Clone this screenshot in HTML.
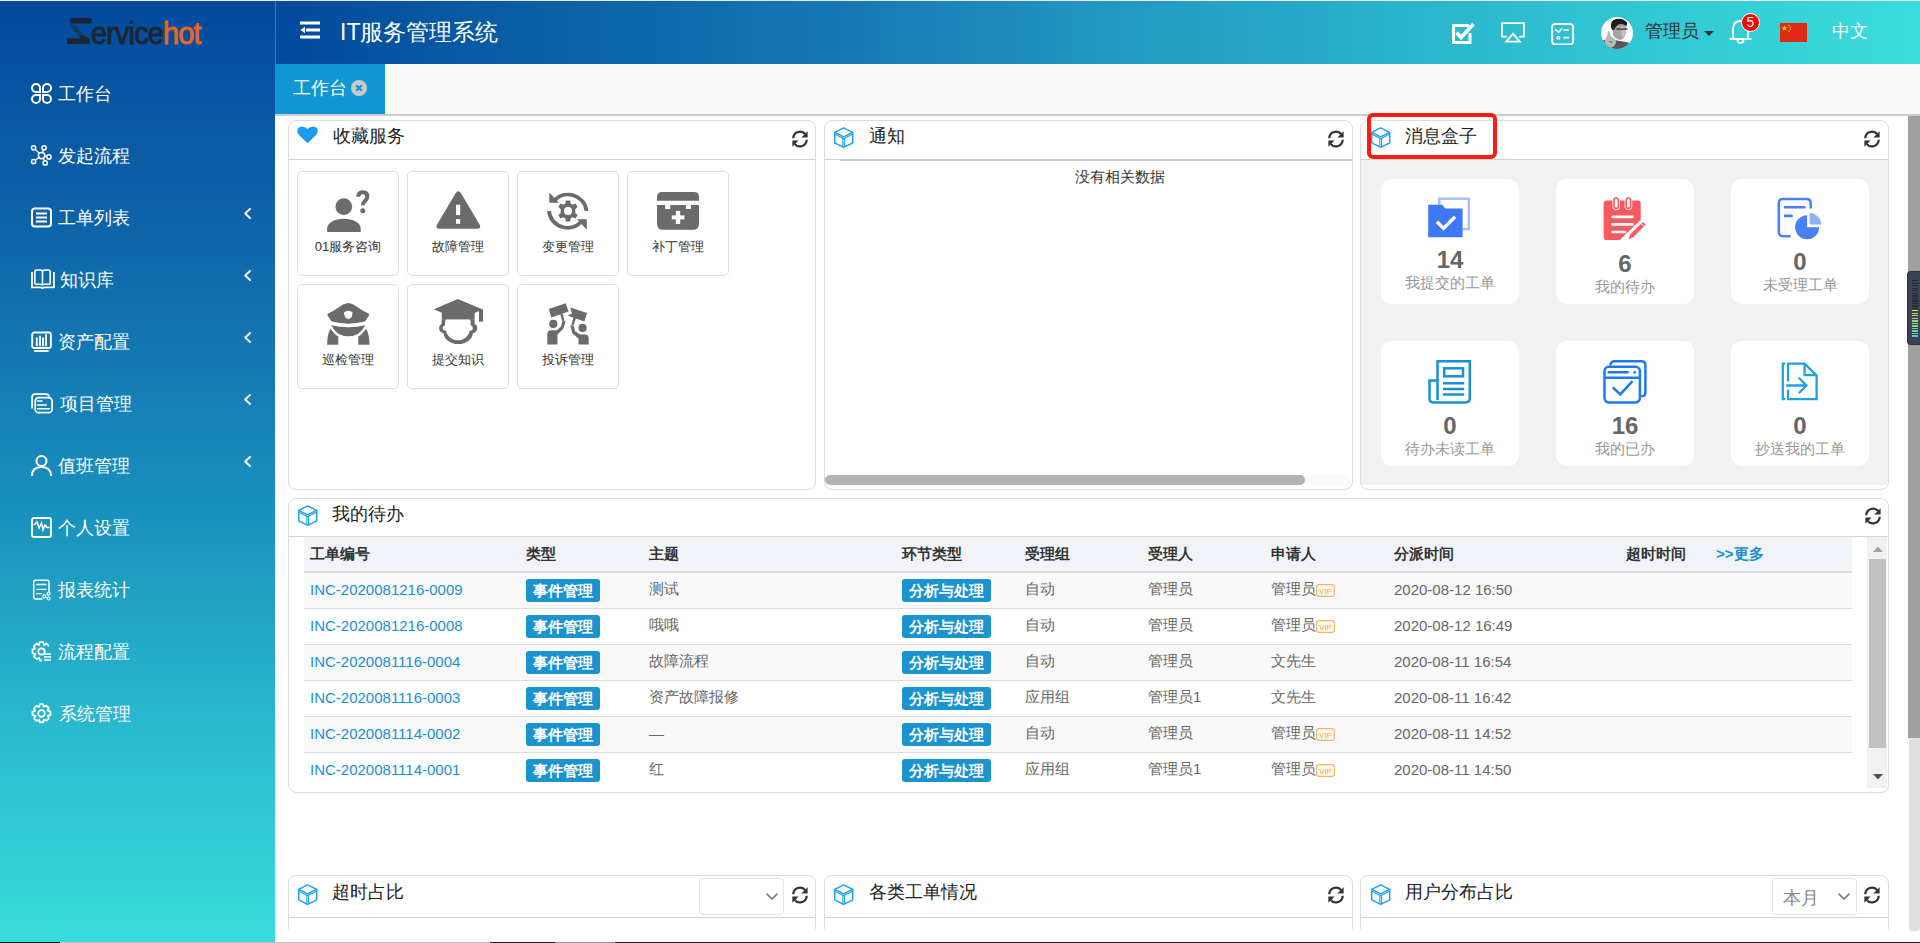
<!DOCTYPE html><html><head><meta charset="utf-8"><style>
*{box-sizing:border-box;margin:0;padding:0}
html,body{width:1920px;height:943px;overflow:hidden;background:#fff}
body{position:relative;font-family:"Liberation Sans",sans-serif;color:#333}
.abs{position:absolute}
svg{display:block}
#side{left:0;top:0;width:275px;height:943px;background:linear-gradient(to bottom,#024a9d 0%,#0f65a9 25%,#1a92bf 55%,#2bbfd0 80%,#39dcdd 100%)}
.mi{position:absolute;left:0;width:275px;height:40px;color:#fff;font-size:18px;line-height:40px}
.mi .ic{position:absolute;left:31px;top:10px;width:21px;height:21px}
#side ~ div svg{overflow:visible}
.mi .tx{position:absolute;left:58px;top:0}
.mi .ar{position:absolute;left:244px;top:10px;width:7px;height:11px}
#hdr{left:275px;top:0;width:1645px;height:64px;background:linear-gradient(to right,#024a9d 0%,#0b62a6 18%,#1679b4 35%,#2296c2 50%,#2bb9cd 72%,#3bdcdd 100%)}
#tabbar{left:275px;top:64px;width:1645px;height:52px;background:#f9f9f9;border-bottom:2px solid #cdcdcd}
#tab{left:275px;top:64px;width:110px;height:50px;background:#1096d0;color:#fff;font-size:18px;line-height:50px}
.panel{position:absolute;border:1px solid #dcdcdc;border-radius:8px;background:#fff;overflow:hidden}
.ph{position:absolute;left:0;top:0;right:0;height:39px;border-bottom:1px solid #d4d4d4}
.ph .t{position:absolute;left:44px;top:0;line-height:32px;font-size:18px;color:#222}
.ph .cube{position:absolute;left:9px;top:6px;width:20px;height:21px}
.ph .rf{position:absolute;right:5px;top:9px;width:18px;height:18px}
#vscroll{left:1909px;top:700px;width:11px;height:231px;background:#e0e0e0;border-radius:0 0 3px 3px}
#vthumb{left:1908px;top:116px;width:12px;height:622px;background:#a0a0a0}
.fav{position:absolute;width:102px;height:105px;border:1px solid #dedede;border-radius:5px;background:#fff}
.fav svg{position:absolute;left:50%;transform:translateX(-50%)}
.fav .lb{position:absolute;left:0;right:0;top:65px;text-align:center;font-size:13px;color:#333;line-height:20px}
.card{position:absolute;width:138px;height:125px;background:#fff;border-radius:11px;text-align:center}
.card svg{position:absolute;left:50%;transform:translateX(-50%)}
.card .n{position:absolute;left:0;right:0;font-size:24px;font-weight:bold;color:#666;line-height:24px}
.card .l{position:absolute;left:0;right:0;font-size:15px;color:#999;line-height:18px}
table{border-collapse:collapse;table-layout:fixed}
#tbl{position:absolute;left:15px;top:38px;width:1548px}
#tbl th{height:35px;background:#f0f3f8;border-bottom:2px solid #dcdcdc;text-align:left;font-size:15px;font-weight:bold;color:#333;padding:0 0 0 6px;white-space:nowrap}
#tbl td{height:36px;border-top:1px solid #dedede;font-size:15px;color:#666;padding:0 0 2px 6px;white-space:nowrap}
#tbl tr.odd td{background:#f9f9f9}
#tbl tr:first-child td{border-top:none}
.lk,#tbl td.lk,#tbl th .lk{color:#1a8fd0}
.bd{position:relative;top:1px;display:inline-block;background:#1b93cf;color:#fff;font-weight:bold;font-size:15px;height:23px;line-height:23px;padding:0 7px;border-radius:3px}
.vip{display:inline-block;vertical-align:-3px;margin-left:0}
.sel{position:absolute;width:85px;height:37px;border:1px solid #dfe6ea;border-radius:4px;background:#fff}
</style></head><body>
<div id="side" class="abs"></div>
<div class="abs" style="left:31px;top:83px;width:24px;height:22px"><svg viewBox="0 0 21 21" style="width:21px;height:21px;overflow:visible" fill="none" stroke="#fff" stroke-width="2"><path d="M9 9H5A4 4 0 1 1 9 5Z"/><path d="M12 9H16A4 4 0 1 0 12 5Z"/><path d="M9 12H5A4 4 0 1 0 9 16Z"/><path d="M12 12H16A4 4 0 1 1 12 16Z"/></svg></div>
<div class="abs" style="left:58px;top:80px;font-size:18px;line-height:28px;color:#fff;white-space:nowrap">工作台</div>
<div class="abs" style="left:31px;top:145px;width:24px;height:22px"><svg viewBox="0 0 21 21" style="width:21px;height:21px;overflow:visible" fill="none" stroke="#fff" stroke-width="1.5"><circle cx="10.6" cy="10.6" r="3.2"/><circle cx="2.6" cy="2.8" r="2.1"/><circle cx="13.1" cy="2.8" r="2.1"/><circle cx="17.9" cy="11.9" r="2.1"/><circle cx="2.6" cy="16.5" r="2.1"/><circle cx="14.2" cy="17.9" r="2.1"/><path d="M4.1 4.3L8.3 8.3M12.4 4.8L11.6 7.5M15.8 11.5L13.8 11.1M4.2 15.2L8.1 12.5M13.7 15.8L12.2 13.5" stroke-width="1.3"/></svg></div>
<div class="abs" style="left:58px;top:142px;font-size:18px;line-height:28px;color:#fff;white-space:nowrap">发起流程</div>
<div class="abs" style="left:31px;top:207px;width:24px;height:22px"><svg viewBox="0 0 21 21" style="width:21px;height:21px;overflow:visible" fill="none" stroke="#fff" stroke-width="2"><rect x="1" y="1.5" width="19" height="18" rx="3"/><path d="M5 6.5H16M5 10.5H16M5 14.5H16"/></svg></div>
<div class="abs" style="left:58px;top:204px;font-size:18px;line-height:28px;color:#fff;white-space:nowrap">工单列表</div>
<svg class="abs" style="left:244px;top:208px;width:7px;height:11px" viewBox="0 0 7 11" fill="none" stroke="#fff" stroke-width="1.9" stroke-linecap="round" stroke-linejoin="round"><path d="M6 1L1.2 5.5L6 10"/></svg>
<div class="abs" style="left:31px;top:269px;width:24px;height:22px"><svg viewBox="0 0 24 21" style="width:24px;height:21px" fill="none" stroke="#fff" stroke-width="1.8"><path d="M1 3.1V18.3H9.8Q11.5 18.3 11.5 20Q11.5 18.3 13.2 18.3H22.9V3.1"/><path d="M11.5 15.5V3Q11.5 1 9.5 1H5.8Q3.8 1 3.8 3V14.3Q3.8 15.3 5 15.3H9.5Q11.5 15.3 11.5 16.5Q11.5 15.3 13.5 15.3H18Q19.2 15.3 19.2 14.3V3Q19.2 1 17.2 1H13.5Q11.5 1 11.5 3" stroke-width="1.6"/></svg></div>
<div class="abs" style="left:60px;top:266px;font-size:18px;line-height:28px;color:#fff;white-space:nowrap">知识库</div>
<svg class="abs" style="left:244px;top:270px;width:7px;height:11px" viewBox="0 0 7 11" fill="none" stroke="#fff" stroke-width="1.9" stroke-linecap="round" stroke-linejoin="round"><path d="M6 1L1.2 5.5L6 10"/></svg>
<div class="abs" style="left:31px;top:331px;width:24px;height:22px"><svg viewBox="0 0 21 21" style="width:21px;height:21px;overflow:visible" fill="none" stroke="#fff" stroke-width="1.9"><rect x="1.2" y="1.55" width="18.7" height="15.4" rx="2"/><path d="M3.1 20H17.7"/><path d="M5.8 14.4V7.1M9 14.4V5.5M12 14.4V7.2M15 14.4V4" stroke-linecap="round"/></svg></div>
<div class="abs" style="left:58px;top:328px;font-size:18px;line-height:28px;color:#fff;white-space:nowrap">资产配置</div>
<svg class="abs" style="left:244px;top:332px;width:7px;height:11px" viewBox="0 0 7 11" fill="none" stroke="#fff" stroke-width="1.9" stroke-linecap="round" stroke-linejoin="round"><path d="M6 1L1.2 5.5L6 10"/></svg>
<div class="abs" style="left:31px;top:393px;width:24px;height:22px"><svg viewBox="0 0 22 21" style="width:22px;height:21px" fill="none" stroke="#fff" stroke-width="1.75"><path d="M1.1 15.5V4Q1.1 1 4 1H15Q17.5 1 18.5 3.5"/><rect x="4.2" y="4.5" width="16.9" height="15.2" rx="3.5"/><path d="M6.1 8H11.5M6.1 12H15.8M6.1 15.8H18.9" stroke-width="1.4"/></svg></div>
<div class="abs" style="left:59.5px;top:390px;font-size:18px;line-height:28px;color:#fff;white-space:nowrap">项目管理</div>
<svg class="abs" style="left:244px;top:394px;width:7px;height:11px" viewBox="0 0 7 11" fill="none" stroke="#fff" stroke-width="1.9" stroke-linecap="round" stroke-linejoin="round"><path d="M6 1L1.2 5.5L6 10"/></svg>
<div class="abs" style="left:31px;top:455px;width:24px;height:22px"><svg viewBox="0 0 21 21" style="width:21px;height:21px;overflow:visible" fill="none" stroke="#fff" stroke-width="2"><circle cx="10.5" cy="6" r="5"/><path d="M1 21Q1 12 10.5 12Q20 12 20 21"/></svg></div>
<div class="abs" style="left:58px;top:452px;font-size:18px;line-height:28px;color:#fff;white-space:nowrap">值班管理</div>
<svg class="abs" style="left:244px;top:456px;width:7px;height:11px" viewBox="0 0 7 11" fill="none" stroke="#fff" stroke-width="1.9" stroke-linecap="round" stroke-linejoin="round"><path d="M6 1L1.2 5.5L6 10"/></svg>
<div class="abs" style="left:31px;top:517px;width:24px;height:22px"><svg viewBox="0 0 21 21" style="width:21px;height:21px;overflow:visible" fill="none" stroke="#fff" stroke-width="1.9"><rect x="1" y="1" width="19" height="19" rx="2"/><path d="M3 8L6 5L8 11L10.5 6L12 13L14 8L16 10.5H18.5" stroke-width="1.5"/></svg></div>
<div class="abs" style="left:58px;top:514px;font-size:18px;line-height:28px;color:#fff;white-space:nowrap">个人设置</div>
<div class="abs" style="left:31px;top:579px;width:24px;height:22px"><svg viewBox="0 0 21 21" style="width:21px;height:21px;overflow:visible" fill="none" stroke="#fff" stroke-width="1.5"><path d="M11.5 20H4.7Q2.7 20 2.7 18V3.2Q2.7 1.2 4.7 1.2H16Q18 1.2 18 3.2V12.8"/><path d="M5.8 5.5H14.9M5.8 10.4H14.9M5.8 14.6H10.7" stroke-width="1.3" stroke-linecap="round"/><circle cx="13.3" cy="17.4" r="1.5" stroke-width="1.1"/><circle cx="17.6" cy="14.6" r="1.5" stroke-width="1.1"/><circle cx="17.6" cy="19.5" r="1.5" stroke-width="1.1"/><path d="M14.6 16.6L16.3 15.4M14.6 18.2L16.3 19" stroke-width="1"/></svg></div>
<div class="abs" style="left:58px;top:576px;font-size:18px;line-height:28px;color:#fff;white-space:nowrap">报表统计</div>
<div class="abs" style="left:31px;top:641px;width:24px;height:22px"><svg viewBox="0 0 21 21" style="width:21px;height:21px;overflow:visible" fill="none" stroke="#fff" stroke-width="1.8"><path d="M11 19.5H9L8.2 17L5.8 18.2L3 15.5L4.2 13L1.5 12V8.5L4 7.7L2.9 5.3L5.5 2.7L7.9 3.9L8.8 1.2H12.2L13.1 3.9L15.5 2.7L18 5.2"/><circle cx="10.5" cy="10.5" r="3.2"/><path d="M13 13H20M13 16H20M13 19H20" stroke-width="1.5"/></svg></div>
<div class="abs" style="left:58px;top:638px;font-size:18px;line-height:28px;color:#fff;white-space:nowrap">流程配置</div>
<div class="abs" style="left:31px;top:703px;width:24px;height:22px"><svg viewBox="0 0 21 21" style="width:21px;height:21px;overflow:visible" fill="none" stroke="#fff" stroke-width="1.8"><path d="M9 1.2H12L12.8 3.8L15.3 2.6L17.7 5L16.4 7.5L19.4 8.6V12L16.8 12.9L17.9 15.3L15.4 17.8L12.9 16.6L12 19.4H9L8.1 16.8L5.6 18L3.1 15.5L4.4 13L1.5 12V8.7L4.1 7.8L2.9 5.3L5.4 2.8L7.9 4Z" stroke-linejoin="round"/><circle cx="10.5" cy="10.5" r="3.3"/></svg></div>
<div class="abs" style="left:58.5px;top:700px;font-size:18px;line-height:28px;color:#fff;white-space:nowrap">系统管理</div>
<svg class="abs" style="left:66px;top:17px;width:27px;height:28px" viewBox="0 0 27 28"><rect x="4" y="1" width="22" height="5.5" rx="2" fill="#1b2632"/><path d="M4 8.5H9.5L18.5 19H13Z" fill="#1b2632" opacity=".9"/><path d="M5.5 9.6H10.5M6.5 11H11.7M7.7 12.4H12.9M8.9 13.8H14.1M10.1 15.2H15.3M11.3 16.6H16.5M12.5 18H17.7" stroke="#1f5d9e" stroke-width=".5"/><path d="M1 21.3H20Q24 21.3 24 24.3V25.4Q24 27 22 27H3Q1 27 1 25Z" fill="#1b2632"/><path d="M13 19H18.5L24.5 21.5H15Z" fill="#1b2632"/></svg>
<div class="abs" style="left:91px;top:17px;font-size:29px;line-height:34px;color:#1b2632;letter-spacing:-0.9px;white-space:nowrap;transform:scaleY(1.06);transform-origin:0 27px;-webkit-text-stroke:0.8px #1b2632">ervice<span style="color:#e8661f;-webkit-text-stroke:0.8px #e8661f">hot</span></div>
<div class="abs" style="left:205px;top:21px;font-size:6px;color:#1b2632">®</div>
<div id="hdr" class="abs"></div>
<div class="abs" style="left:275px;top:0;width:1px;height:114px;background:rgba(255,255,255,.25)"></div>
<svg class="abs" style="left:300px;top:21px;width:20px;height:18px" viewBox="0 0 20 18" fill="#fff"><rect x="0" y="0.5" width="20" height="3"/><rect x="6" y="7.5" width="14" height="3"/><rect x="0" y="14.5" width="20" height="3"/><path d="M0.5 9L5 5.8V12.2Z"/></svg>
<div class="abs" style="left:340px;top:14px;font-size:23px;line-height:36px;color:#fff;white-space:nowrap">IT服务管理系统</div>
<svg class="abs" style="left:1452px;top:21px;width:23px;height:23px" viewBox="0 0 23 23" fill="none"><path d="M17 4.5H1.5V21.5H18V12" stroke="#fff" stroke-width="3"/><path d="M4.5 11.5L9 16.5L21.5 3" stroke="#fff" stroke-width="3.6"/></svg>
<svg class="abs" style="left:1501px;top:22px;width:24px;height:21px" viewBox="0 0 24 21" fill="none" stroke="#fff" stroke-width="1.6"><path d="M6 14.7H1V1.2H23V14.7H18" stroke-width="1.7"/><path d="M12 11.6L18.8 19.7H5.2Z" stroke-width="1.7"/></svg>
<svg class="abs" style="left:1551px;top:22px;width:24px;height:23px" viewBox="0 0 24 23" fill="none" stroke="#fff" stroke-width="2"><rect x="1.1" y="1.9" width="21" height="20.6" rx="3.2"/><path d="M4.2 7.4L7.6 10.3L10.9 6.4" stroke-width="1.6"/><path d="M12.4 8H17.9M12.4 15.7H17.9" stroke-width="1.7"/><circle cx="7.4" cy="15.7" r="1.3" stroke-width="1.5"/></svg>
<svg class="abs" style="left:1601px;top:17px;width:32px;height:32px" viewBox="0 0 32 32"><defs><clipPath id="av"><circle cx="16" cy="16" r="16"/></clipPath></defs><circle cx="16" cy="16" r="16" fill="#fff"/><g clip-path="url(#av)"><path d="M0 24Q8 21.5 16 23.5Q24 24 32 27V32H0Z" fill="#585858"/><path d="M11 8Q11 3 17 3Q25 3 25.5 9L25 16.5Q23 22 19 23Q14 22 12 18Z" fill="#a4a4a4"/><path d="M19.5 9.5Q25.2 9.5 25 14Q24.5 19 20.5 20.5Q21.5 15 19.5 9.5Z" fill="#c4c4c4"/><path d="M10 10.5Q9 3 15 2Q22 0.5 26.2 5.5L25.6 9Q21 6 17.5 7.5Q14.5 9 13.8 12.5L11.2 13Z" fill="#1e1e1e"/><path d="M15.5 12.2H26.5" stroke="#2a2a2a" stroke-width="1.3"/><path d="M7 14Q8.6 13.4 9.2 16.8L10.2 19.8Q14.2 21 15.2 25Q14.2 30 9 31Q4 30 3.5 26Q4 21 6.2 19Z" fill="#b8b8b8"/><path d="M8 25Q10 24 11 26" stroke="#666" stroke-width="1.2" fill="none"/></g></svg>
<div class="abs" style="left:1645px;top:17px;font-size:18px;line-height:28px;color:#333;white-space:nowrap">管理员</div>
<svg class="abs" style="left:1704px;top:31px;width:10px;height:5px" viewBox="0 0 10 5"><path d="M0 0H10L5 5Z" fill="#333"/></svg>
<svg class="abs" style="left:1729px;top:19px;width:23px;height:26px" viewBox="0 0 23 26" fill="none" stroke="#fff" stroke-width="1.8"><path d="M4 19.5V10.5Q4 2 11.5 2Q19 2 19 10.5V19.5"/><path d="M0.5 20H22.5" stroke-width="2"/><path d="M8.5 20.5Q8.5 24 11.5 24Q14.5 24 14.5 20.5"/></svg>
<div class="abs" style="left:1741px;top:13px;width:19px;height:19px;border-radius:50%;background:#f00;border:1.5px solid #fff;color:#fff;font-size:14px;line-height:16px;text-align:center">5</div>
<svg class="abs" style="left:1780px;top:23px;width:27px;height:19px" viewBox="0 0 27 19"><rect width="27" height="19" fill="#de2a12"/><path d="M4.5 2.2L5.3 4.4H7.5L5.8 5.7L6.4 7.8L4.5 6.6L2.6 7.8L3.2 5.7L1.5 4.4H3.7Z" fill="#ffde00"/><circle cx="9" cy="2.5" r=".7" fill="#ffde00"/><circle cx="10.2" cy="4.3" r=".7" fill="#ffde00"/><circle cx="10.2" cy="6.6" r=".7" fill="#ffde00"/><circle cx="9" cy="8.3" r=".7" fill="#ffde00"/></svg>
<div class="abs" style="left:1832px;top:17px;font-size:18px;line-height:28px;color:#fff;white-space:nowrap">中文</div>
<div id="tabbar" class="abs"></div>
<div id="tab" class="abs"></div>
<div class="abs" style="left:293px;top:74px;font-size:18px;line-height:28px;color:#fff;white-space:nowrap">工作台</div>
<svg class="abs" style="left:351px;top:80px;width:16px;height:16px" viewBox="0 0 16 16"><circle cx="8" cy="8" r="8" fill="#cbcbcb"/><path d="M5.2 5.2L10.8 10.8M10.8 5.2L5.2 10.8" stroke="#1096d0" stroke-width="2.2"/></svg>
<div class="abs" style="left:0;top:0;width:1920px;height:1px;background:#ece8e8"></div>
<div id="vscroll" class="abs"></div>
<div id="vthumb" class="abs"></div>
<div class="abs" style="left:1907px;top:271px;width:13px;height:74px;background:#3d4352;border-radius:4px 0 0 4px;border:1px solid #2c313c;border-right:none"></div>
<div class="abs" style="left:1912px;top:280px;width:6px;height:30px;background:repeating-linear-gradient(to bottom,#262a33 0,#262a33 1.3px,transparent 1.3px,transparent 2.55px)"></div>
<div class="abs" style="left:1912px;top:310px;width:6px;height:27px;background:repeating-linear-gradient(to bottom,rgba(61,67,82,0) 0,rgba(61,67,82,0) 1.3px,#3d4352 1.3px,#3d4352 2.55px),linear-gradient(to bottom,#d0d848,#7ad88a 60%,#3fd6c4)"></div>
<div class="panel" style="left:288px;top:120px;width:528px;height:370px"></div>
<div class="panel" style="left:824px;top:120px;width:529px;height:370px"></div>
<div class="panel" style="left:1360px;top:120px;width:529px;height:370px"></div>
<div class="panel" style="left:288px;top:498px;width:1601px;height:295px"></div>
<div class="abs" style="left:289px;top:159px;width:526px;height:1px;background:#d4d4d4"></div>
<div class="abs" style="left:825px;top:159px;width:527px;height:1px;background:#d4d4d4"></div>
<div class="abs" style="left:1361px;top:159px;width:527px;height:1px;background:#d4d4d4"></div>
<div class="abs" style="left:289px;top:536px;width:1599px;height:1px;background:#d4d4d4"></div>
<svg class="abs" style="left:297px;top:126px;width:21px;height:18px" viewBox="0 0 21 18"><path d="M10.5 17.3L2.2 9.2Q0 7 0.3 4.6Q0.8 0.8 4.6 0.4Q7.8 0.2 10.5 3.1Q13.2 0.2 16.4 0.4Q20.2 0.8 20.7 4.6Q21 7 18.8 9.2Z" fill="#1a9cf5"/></svg>
<div class="abs" style="left:333px;top:122px;font-size:18px;line-height:28px;color:#222;white-space:nowrap">收藏服务</div>
<svg class="abs" style="left:791px;top:130px;width:18px;height:18px" viewBox="0 0 18 18" fill="none"><path d="M2.3 8.2A6.7 6.7 0 0 1 14.3 4.2" stroke="#333" stroke-width="2.2"/><path d="M16.6 1.3V7.6H10.4Z" fill="#333"/><path d="M15.7 9.8A6.7 6.7 0 0 1 3.7 13.8" stroke="#333" stroke-width="2.2"/><path d="M1.4 16.7V10.4H7.6Z" fill="#333"/></svg>
<div class="fav" style="left:297px;top:171px"><div class="lb">01服务咨询</div></div>
<div class="abs" style="left:327px;top:190px;width:43px;height:42px"><svg width="43" height="42" viewBox="0 0 43 42" fill="#6b6b6b"><circle cx="16.8" cy="16.6" r="8.4"/><path d="M0.1 42V38.5A16.8 9.8 0 0 1 33.7 38.5V42Z"/><path d="M31.3 6.8Q31.3 2.2 35.8 2.2Q40.3 2.2 40.3 6.6Q40.3 9.2 37.8 11.2Q35.8 12.8 35.8 15.2" fill="none" stroke="#6b6b6b" stroke-width="4"/><circle cx="35.8" cy="20.7" r="2.5"/></svg></div>
<div class="fav" style="left:407px;top:171px"><div class="lb">故障管理</div></div>
<div class="abs" style="left:436px;top:191px;width:45px;height:39px"><svg width="45" height="39" viewBox="0 0 45 39"><path d="M19.6 2.2Q22.3 -1.8 25 2.2L43.6 33.5Q45.7 37.8 41 37.8H3.6Q-1 37.8 1.1 33.5Z" fill="#6b6b6b"/><rect x="20" y="13.7" width="4.2" height="10.4" fill="#fff"/><rect x="20" y="28.1" width="4.2" height="4.7" fill="#fff"/></svg></div>
<div class="fav" style="left:517px;top:171px"><div class="lb">变更管理</div></div>
<div class="abs" style="left:547px;top:190px;width:42px;height:42px"><svg width="42" height="42" viewBox="0 0 42 42"><path d="M7.5 10.5A18.6 18.6 0 0 1 39.6 21" fill="none" stroke="#6b6b6b" stroke-width="3.8"/><path d="M2.3 2.4V12.8H11.8Z" fill="#6b6b6b"/><path d="M2 21A18.6 18.6 0 0 0 34 32" fill="none" stroke="#6b6b6b" stroke-width="3.8"/><path d="M39.8 39.7V29.2H30Z" fill="#6b6b6b"/><g transform="translate(21 21)"><path d="M-2 -10.5H2L2.6 -7.5L4.8 -6.3L7.6 -7.4L9.6 -4L7.3 -2L7.3 2L9.6 4L7.6 7.4L4.8 6.3L2.6 7.5L2 10.5H-2L-2.6 7.5L-4.8 6.3L-7.6 7.4L-9.6 4L-7.3 2L-7.3 -2L-9.6 -4L-7.6 -7.4L-4.8 -6.3L-2.6 -7.5Z" fill="#6b6b6b"/><circle r="4.1" fill="#fff"/></g></svg></div>
<div class="fav" style="left:627px;top:171px"><div class="lb">补丁管理</div></div>
<div class="abs" style="left:657px;top:192px;width:42px;height:38px"><svg width="42" height="38" viewBox="0 0 42 38"><path d="M0 8.7V5Q0 0.1 5 0.1H37Q42 0.1 42 5V8.7Z" fill="#6b6b6b"/><path d="M0 12.9H8.2V17.1H13.2V12.9H28.9V17.1H33.9V12.9H42V31.7Q42 37.7 36 37.7H6Q0 37.7 0 31.7Z" fill="#6b6b6b"/><rect x="18.8" y="18.9" width="4.4" height="13.1" fill="#fff"/><rect x="14.8" y="23.4" width="12.6" height="4" fill="#fff"/></svg></div>
<div class="fav" style="left:297px;top:284px"><div class="lb">巡检管理</div></div>
<div class="abs" style="left:327px;top:302px;width:43px;height:43px"><svg width="43" height="43" viewBox="0 0 43 43" fill="#6b6b6b"><path d="M0.6 11.8Q6 9.5 13 4.5Q17 1 21.3 1Q25.6 1 29.6 4.5Q36.6 9.5 42 11.8Q42.6 13.2 41.6 14.2L37.9 19.6Q21.3 23.8 4.7 19.6L1 14.2Q0 13.2 0.6 11.8Z"/><path d="M17 10.3Q21.3 7.3 25.6 10.3L24.8 14.8Q21.3 19.3 17.8 14.8Z" fill="#fff"/><path d="M4.3 23.3Q21.3 27 38.3 23.3Q33 34.3 21.3 34.3Q9.6 34.3 4.3 23.3Z"/><path d="M3.5 26.5Q7.5 32.5 11.3 34.5V42.7H0.1Q0.2 32.5 3.5 26.5Z"/><path d="M39.1 26.5Q35.1 32.5 31.3 34.5V42.7H42.5Q42.4 32.5 39.1 26.5Z"/></svg></div>
<div class="fav" style="left:407px;top:284px"><div class="lb">提交知识</div></div>
<div class="abs" style="left:433px;top:299px;width:50px;height:47px"><svg width="50" height="47" viewBox="0 0 50 47" fill="#6b6b6b"><path d="M0.8 10.2L24.7 0L49.8 10.6L41.6 13.9V20.8H8.8V13.7Z"/><path d="M46 10.4H50V22.6H46Z"/><path d="M8.6 20.5H41.6V24.7Q44.5 26.5 44.2 29.5Q44 33 39.9 34.3A14.7 11.4 0 0 1 10.55 34.3Q6.2 33 6.1 29.5Q6 26.5 8.6 24.7Z"/><path d="M13.6 20.6H36.1Q37.6 20.6 37.6 22.1V26.3Q39.8 27 39.8 29.2Q39.8 31.5 36.65 31.7A11.8 10.2 0 0 1 13.1 31.7Q9.6 31.5 9.6 29.2Q9.6 27 12.1 26.3V22.1Q12.1 20.6 13.6 20.6Z" fill="#fff"/></svg></div>
<div class="fav" style="left:517px;top:284px"><div class="lb">投诉管理</div></div>
<div class="abs" style="left:547px;top:302px;width:42px;height:43px"><svg width="42" height="43" viewBox="0 0 42 43" fill="#6b6b6b"><path d="M1.75 7L18.66 1.16L21.57 9.6L4.37 15.45Z"/><path d="M13.2 12.4L15.6 11.6L17.6 19.4L15.4 19.6Z"/><circle cx="6.3" cy="21.9" r="4.1"/><path d="M0.3 42.6V32.3Q0.3 28.3 4.6 28.3H9.9L14 24.5L15.2 19.2L18.7 19.2L16.3 26.8L10.5 32.6V42.6Z"/><path d="M23.3 5.5L40.2 11.1L37.3 19.5L20.4 13.4L24.8 11.7Z"/><path d="M26.6 15.2L29 16L26.6 23.6L24.2 23.2Z"/><circle cx="35.6" cy="25.9" r="4.1"/><path d="M41.7 42.6V36.4Q41.7 32.6 37.9 32.6H33.2L28 29.2L26.8 23.9L23.3 23.3L25.4 31.5L31.5 36.4V42.6Z"/></svg></div>
<svg class="abs" style="left:834px;top:127px;width:20px;height:21px" viewBox="0 0 20 21" fill="none" stroke="#1ea0f2" stroke-width="1.5" stroke-linejoin="round"><path d="M9.65 0.8L18.7 5.3V15.8L9.65 20.3L0.7 15.8V5.3Z"/><path d="M0.9 5.3L9.65 9.9L18.4 5.3"/><path d="M1 7.3L9.65 11.7L18.3 7.3" stroke-width="1.1"/><path d="M8.8 11.5V19.9M10.5 11.5V19.9" stroke-width="1.1"/></svg>
<div class="abs" style="left:869px;top:122px;font-size:18px;line-height:28px;color:#222;white-space:nowrap">通知</div>
<svg class="abs" style="left:1327px;top:130px;width:18px;height:18px" viewBox="0 0 18 18" fill="none"><path d="M2.3 8.2A6.7 6.7 0 0 1 14.3 4.2" stroke="#333" stroke-width="2.2"/><path d="M16.6 1.3V7.6H10.4Z" fill="#333"/><path d="M15.7 9.8A6.7 6.7 0 0 1 3.7 13.8" stroke="#333" stroke-width="2.2"/><path d="M1.4 16.7V10.4H7.6Z" fill="#333"/></svg>
<div class="abs" style="left:840px;top:159px;width:512px;height:2px;background:#d0d0d0"></div>
<div class="abs" style="left:1075px;top:167px;font-size:15px;line-height:20px;color:#333;white-space:nowrap">没有相关数据</div>
<div class="abs" style="left:825px;top:475px;width:526px;height:10px;border-radius:5px;background:#fafafa"></div>
<div class="abs" style="left:825px;top:475px;width:480px;height:10px;border-radius:5px;background:#b3b3b3"></div>
<div class="abs" style="left:1361px;top:160px;width:527px;height:325px;background:#f1f1f1"></div>
<svg class="abs" style="left:1371px;top:127px;width:20px;height:21px" viewBox="0 0 20 21" fill="none" stroke="#1ea0f2" stroke-width="1.5" stroke-linejoin="round"><path d="M9.65 0.8L18.7 5.3V15.8L9.65 20.3L0.7 15.8V5.3Z"/><path d="M0.9 5.3L9.65 9.9L18.4 5.3"/><path d="M1 7.3L9.65 11.7L18.3 7.3" stroke-width="1.1"/><path d="M8.8 11.5V19.9M10.5 11.5V19.9" stroke-width="1.1"/></svg>
<div class="abs" style="left:1405px;top:122px;font-size:18px;line-height:28px;color:#222;white-space:nowrap">消息盒子</div>
<svg class="abs" style="left:1863px;top:130px;width:18px;height:18px" viewBox="0 0 18 18" fill="none"><path d="M2.3 8.2A6.7 6.7 0 0 1 14.3 4.2" stroke="#333" stroke-width="2.2"/><path d="M16.6 1.3V7.6H10.4Z" fill="#333"/><path d="M15.7 9.8A6.7 6.7 0 0 1 3.7 13.8" stroke="#333" stroke-width="2.2"/><path d="M1.4 16.7V10.4H7.6Z" fill="#333"/></svg>
<div class="abs" style="left:1367px;top:113px;width:130px;height:46px;border:4.5px solid #ff1b0f;border-radius:6px"></div>
<div class="card" style="left:1381px;top:179px"></div>
<div class="abs" style="left:1428px;top:197px;width:42px;height:41px"><svg width="42" height="41" viewBox="0 0 42 41"><rect x="11.3" y="1.7" width="29.5" height="30.4" fill="none" stroke="#a3c0fb" stroke-width="2.4"/><path d="M0.2 7.8H14.2L17.2 11.6H34.6V40.2H0.2Z" fill="#3d78f7"/><path d="M8.9 24.8L15.6 31.4L27 19.8" fill="none" stroke="#fff" stroke-width="3.4"/></svg></div>
<div class="abs" style="left:1381px;top:248px;width:138px;text-align:center;font-size:24px;font-weight:bold;color:#666;line-height:24px">14</div>
<div class="abs" style="left:1381px;top:275px;width:138px;text-align:center;font-size:15px;color:#999;line-height:16px;white-space:nowrap">我提交的工单</div>
<div class="card" style="left:1556px;top:179px"></div>
<div class="abs" style="left:1603px;top:197px;width:45px;height:44px"><svg width="45" height="44" viewBox="0 0 45 44"><path d="M3.6 3.5H34.7Q37.7 3.5 37.7 6.5V22.7L16.7 43.1H3.6Q0.6 43.1 0.6 40.1V6.5Q0.6 3.5 3.6 3.5Z" fill="#f55a60"/><rect x="9.4" y="-0.5" width="7.6" height="13.6" rx="3.8" fill="#fff"/><rect x="21.6" y="-0.5" width="7.6" height="13.6" rx="3.8" fill="#fff"/><rect x="11" y="1.07" width="4.4" height="10.3" rx="2.2" fill="none" stroke="#f55a60" stroke-width="1.6"/><rect x="23.2" y="1.07" width="4.4" height="10.3" rx="2.2" fill="none" stroke="#f55a60" stroke-width="1.6"/><path d="M9.7 19.8H29.5M9.7 27.4H29.5M9.7 35H22" stroke="#fff" stroke-width="2.7" stroke-linecap="round"/><path d="M25.5 42.5L27.5 37L40 25L42.6 27.6L30.6 40Z" fill="#f55a60"/><path d="M38.2 26.6L40.8 29.2" stroke="#fff" stroke-width="1"/></svg></div>
<div class="abs" style="left:1556px;top:252px;width:138px;text-align:center;font-size:24px;font-weight:bold;color:#666;line-height:24px">6</div>
<div class="abs" style="left:1556px;top:279px;width:138px;text-align:center;font-size:15px;color:#999;line-height:16px;white-space:nowrap">我的待办</div>
<div class="card" style="left:1731px;top:179px"></div>
<div class="abs" style="left:1777px;top:197px;width:45px;height:43px"><svg width="45" height="43" viewBox="0 0 45 43" fill="none"><path d="M12.5 39.2H6Q1.8 39.2 1.8 35V6Q1.8 1.9 6 1.9H29.5Q33.7 1.9 33.7 6V10.5" stroke="#4a80f5" stroke-width="2.5" stroke-linecap="round"/><path d="M8 10.2H27.5M8 18.9H14.6" stroke="#4a80f5" stroke-width="2.6" stroke-linecap="round"/><path d="M30.1 18.3V30.3H42.1A12 12 0 1 1 30.1 18.3Z" fill="#4a80f5"/><path d="M32.6 16A11.6 11.6 0 0 1 44.2 27.6H32.6Z" fill="#8fb0f5"/></svg></div>
<div class="abs" style="left:1731px;top:250px;width:138px;text-align:center;font-size:24px;font-weight:bold;color:#666;line-height:24px">0</div>
<div class="abs" style="left:1731px;top:277px;width:138px;text-align:center;font-size:15px;color:#999;line-height:16px;white-space:nowrap">未受理工单</div>
<div class="card" style="left:1381px;top:341px"></div>
<div class="abs" style="left:1428px;top:360px;width:44px;height:44px"><svg width="44" height="44" viewBox="0 0 44 44" fill="none" stroke="#1a8fd8" stroke-width="2.5"><path d="M9.5 40V1.3H41.8V38Q41.8 42.4 37.5 42.4H5.5Q1.5 42.4 1.5 38.5V20.6H9.5"/><rect x="16.2" y="8.3" width="18.8" height="8" /><path d="M15 23.3H36.2M15 28.9H36.2M15 34.4H36.2"/></svg></div>
<div class="abs" style="left:1381px;top:414px;width:138px;text-align:center;font-size:24px;font-weight:bold;color:#666;line-height:24px">0</div>
<div class="abs" style="left:1381px;top:441px;width:138px;text-align:center;font-size:15px;color:#999;line-height:16px;white-space:nowrap">待办未读工单</div>
<div class="card" style="left:1556px;top:341px"></div>
<div class="abs" style="left:1603px;top:360px;width:44px;height:44px"><svg width="44" height="44" viewBox="0 0 44 44" fill="none" stroke="#1e78f5" stroke-width="2.5"><path d="M7.4 5.5Q7.4 1.3 11.6 1.3H38.2Q42.4 1.3 42.4 5.5V32.2Q42.4 36.3 38.3 36.3"/><rect x="1.5" y="6.8" width="35.4" height="35.6" rx="4.3"/><path d="M1.5 17.8H36.9"/><path d="M5.8 12.3H24.6" stroke-width="2.6" stroke-linecap="round"/><path d="M31.6 12.3H31.7" stroke-width="2.8" stroke-linecap="round"/><path d="M9.8 27.3L17.2 34.4L29.5 21.2"/></svg></div>
<div class="abs" style="left:1556px;top:414px;width:138px;text-align:center;font-size:24px;font-weight:bold;color:#666;line-height:24px">16</div>
<div class="abs" style="left:1556px;top:441px;width:138px;text-align:center;font-size:15px;color:#999;line-height:16px;white-space:nowrap">我的已办</div>
<div class="card" style="left:1731px;top:341px"></div>
<div class="abs" style="left:1781px;top:362px;width:37px;height:39px"><svg width="37" height="39" viewBox="0 0 37 39" fill="none" stroke="#22a0e0" stroke-width="2.3"><path d="M4.3 1.6H1.8V37.1H4.3"/><path d="M7.04 19.5V1.6H23.6L35.6 13.6V37.1H7.04V27.8"/><path d="M23.6 1.6V13.1H35.6"/><path d="M5.2 23.5H25.5M17.8 15.8L25.5 23.5L17.8 31.2"/></svg></div>
<div class="abs" style="left:1731px;top:414px;width:138px;text-align:center;font-size:24px;font-weight:bold;color:#666;line-height:24px">0</div>
<div class="abs" style="left:1731px;top:441px;width:138px;text-align:center;font-size:15px;color:#999;line-height:16px;white-space:nowrap">抄送我的工单</div>
<svg class="abs" style="left:298px;top:505px;width:20px;height:21px" viewBox="0 0 20 21" fill="none" stroke="#1ea0f2" stroke-width="1.5" stroke-linejoin="round"><path d="M9.65 0.8L18.7 5.3V15.8L9.65 20.3L0.7 15.8V5.3Z"/><path d="M0.9 5.3L9.65 9.9L18.4 5.3"/><path d="M1 7.3L9.65 11.7L18.3 7.3" stroke-width="1.1"/><path d="M8.8 11.5V19.9M10.5 11.5V19.9" stroke-width="1.1"/></svg>
<div class="abs" style="left:332px;top:500px;font-size:18px;line-height:28px;color:#222;white-space:nowrap">我的待办</div>
<svg class="abs" style="left:1864px;top:507px;width:18px;height:18px" viewBox="0 0 18 18" fill="none"><path d="M2.3 8.2A6.7 6.7 0 0 1 14.3 4.2" stroke="#333" stroke-width="2.2"/><path d="M16.6 1.3V7.6H10.4Z" fill="#333"/><path d="M15.7 9.8A6.7 6.7 0 0 1 3.7 13.8" stroke="#333" stroke-width="2.2"/><path d="M1.4 16.7V10.4H7.6Z" fill="#333"/></svg>
<table id="tbl" style="left:304px;top:537px;position:absolute;width:1548px"><colgroup><col style="width:216px"><col style="width:123px"><col style="width:253px"><col style="width:123px"><col style="width:123px"><col style="width:123px"><col style="width:123px"><col style="width:232px"><col style="width:90px"><col style="width:142px"></colgroup><tr><th>工单编号</th><th>类型</th><th>主题</th><th>环节类型</th><th>受理组</th><th>受理人</th><th>申请人</th><th>分派时间</th><th>超时时间</th><th><span class="lk">&gt;&gt;更多</span></th></tr><tr class="odd"><td class="lk">INC-2020081216-0009</td><td><span class="bd">事件管理</span></td><td>测试</td><td><span class="bd">分析与处理</span></td><td>自动</td><td>管理员</td><td>管理员<svg class="vip" width="19" height="13" viewBox="0 0 19 13"><rect x="0.6" y="0.6" width="17.8" height="11.8" rx="2.5" fill="#fff8ee" stroke="#f6b66a" stroke-width="1.1"/><text x="9.5" y="9.6" text-anchor="middle" font-family="Liberation Sans" font-size="8" fill="#f6a94f">VIP</text></svg></td><td>2020-08-12 16:50</td><td></td><td></td></tr><tr><td class="lk">INC-2020081216-0008</td><td><span class="bd">事件管理</span></td><td>哦哦</td><td><span class="bd">分析与处理</span></td><td>自动</td><td>管理员</td><td>管理员<svg class="vip" width="19" height="13" viewBox="0 0 19 13"><rect x="0.6" y="0.6" width="17.8" height="11.8" rx="2.5" fill="#fff8ee" stroke="#f6b66a" stroke-width="1.1"/><text x="9.5" y="9.6" text-anchor="middle" font-family="Liberation Sans" font-size="8" fill="#f6a94f">VIP</text></svg></td><td>2020-08-12 16:49</td><td></td><td></td></tr><tr class="odd"><td class="lk">INC-2020081116-0004</td><td><span class="bd">事件管理</span></td><td>故障流程</td><td><span class="bd">分析与处理</span></td><td>自动</td><td>管理员</td><td>文先生</td><td>2020-08-11 16:54</td><td></td><td></td></tr><tr><td class="lk">INC-2020081116-0003</td><td><span class="bd">事件管理</span></td><td>资产故障报修</td><td><span class="bd">分析与处理</span></td><td>应用组</td><td>管理员1</td><td>文先生</td><td>2020-08-11 16:42</td><td></td><td></td></tr><tr class="odd"><td class="lk">INC-2020081114-0002</td><td><span class="bd">事件管理</span></td><td>—</td><td><span class="bd">分析与处理</span></td><td>自动</td><td>管理员</td><td>管理员<svg class="vip" width="19" height="13" viewBox="0 0 19 13"><rect x="0.6" y="0.6" width="17.8" height="11.8" rx="2.5" fill="#fff8ee" stroke="#f6b66a" stroke-width="1.1"/><text x="9.5" y="9.6" text-anchor="middle" font-family="Liberation Sans" font-size="8" fill="#f6a94f">VIP</text></svg></td><td>2020-08-11 14:52</td><td></td><td></td></tr><tr><td class="lk">INC-2020081114-0001</td><td><span class="bd">事件管理</span></td><td>红</td><td><span class="bd">分析与处理</span></td><td>应用组</td><td>管理员1</td><td>管理员<svg class="vip" width="19" height="13" viewBox="0 0 19 13"><rect x="0.6" y="0.6" width="17.8" height="11.8" rx="2.5" fill="#fff8ee" stroke="#f6b66a" stroke-width="1.1"/><text x="9.5" y="9.6" text-anchor="middle" font-family="Liberation Sans" font-size="8" fill="#f6a94f">VIP</text></svg></td><td>2020-08-11 14:50</td><td></td><td></td></tr></table>
<div class="abs" style="left:1867px;top:537px;width:20px;height:251px;background:#f1f1f1"></div>
<div class="abs" style="left:1869px;top:559px;width:17px;height:189px;background:#c1c1c1"></div>
<svg class="abs" style="left:1873px;top:546px;width:10px;height:6px" viewBox="0 0 10 6"><path d="M0 6H10L5 0.5Z" fill="#a3a3a3"/></svg>
<svg class="abs" style="left:1873px;top:774px;width:10px;height:6px" viewBox="0 0 10 6"><path d="M0 0H10L5 5.5Z" fill="#505050"/></svg>
<div class="abs" style="left:275px;top:866px;width:1633px;height:63px;overflow:hidden">
<div class="panel" style="left:13px;top:9px;width:528px;height:120px"></div>
<div class="abs" style="left:14px;top:51px;width:526px;height:1px;background:#d4d4d4"></div>
<div class="panel" style="left:549px;top:9px;width:529px;height:120px"></div>
<div class="abs" style="left:550px;top:51px;width:527px;height:1px;background:#d4d4d4"></div>
<div class="panel" style="left:1085px;top:9px;width:529px;height:120px"></div>
<div class="abs" style="left:1086px;top:51px;width:527px;height:1px;background:#d4d4d4"></div>
</div>
<svg class="abs" style="left:298px;top:884px;width:20px;height:21px" viewBox="0 0 20 21" fill="none" stroke="#1ea0f2" stroke-width="1.5" stroke-linejoin="round"><path d="M9.65 0.8L18.7 5.3V15.8L9.65 20.3L0.7 15.8V5.3Z"/><path d="M0.9 5.3L9.65 9.9L18.4 5.3"/><path d="M1 7.3L9.65 11.7L18.3 7.3" stroke-width="1.1"/><path d="M8.8 11.5V19.9M10.5 11.5V19.9" stroke-width="1.1"/></svg>
<div class="abs" style="left:332px;top:878px;font-size:18px;line-height:28px;color:#222;white-space:nowrap">超时占比</div>
<div class="sel" style="left:699px;top:878px"></div>
<svg class="abs" style="left:766px;top:893px;width:12px;height:7px" viewBox="0 0 12 7" fill="none" stroke="#777" stroke-width="1.6"><path d="M0.6 0.6L6 6L11.4 0.6"/></svg>
<svg class="abs" style="left:791px;top:886px;width:18px;height:18px" viewBox="0 0 18 18" fill="none"><path d="M2.3 8.2A6.7 6.7 0 0 1 14.3 4.2" stroke="#333" stroke-width="2.2"/><path d="M16.6 1.3V7.6H10.4Z" fill="#333"/><path d="M15.7 9.8A6.7 6.7 0 0 1 3.7 13.8" stroke="#333" stroke-width="2.2"/><path d="M1.4 16.7V10.4H7.6Z" fill="#333"/></svg>
<svg class="abs" style="left:834px;top:884px;width:20px;height:21px" viewBox="0 0 20 21" fill="none" stroke="#1ea0f2" stroke-width="1.5" stroke-linejoin="round"><path d="M9.65 0.8L18.7 5.3V15.8L9.65 20.3L0.7 15.8V5.3Z"/><path d="M0.9 5.3L9.65 9.9L18.4 5.3"/><path d="M1 7.3L9.65 11.7L18.3 7.3" stroke-width="1.1"/><path d="M8.8 11.5V19.9M10.5 11.5V19.9" stroke-width="1.1"/></svg>
<div class="abs" style="left:869px;top:878px;font-size:18px;line-height:28px;color:#222;white-space:nowrap">各类工单情况</div>
<svg class="abs" style="left:1327px;top:886px;width:18px;height:18px" viewBox="0 0 18 18" fill="none"><path d="M2.3 8.2A6.7 6.7 0 0 1 14.3 4.2" stroke="#333" stroke-width="2.2"/><path d="M16.6 1.3V7.6H10.4Z" fill="#333"/><path d="M15.7 9.8A6.7 6.7 0 0 1 3.7 13.8" stroke="#333" stroke-width="2.2"/><path d="M1.4 16.7V10.4H7.6Z" fill="#333"/></svg>
<svg class="abs" style="left:1371px;top:884px;width:20px;height:21px" viewBox="0 0 20 21" fill="none" stroke="#1ea0f2" stroke-width="1.5" stroke-linejoin="round"><path d="M9.65 0.8L18.7 5.3V15.8L9.65 20.3L0.7 15.8V5.3Z"/><path d="M0.9 5.3L9.65 9.9L18.4 5.3"/><path d="M1 7.3L9.65 11.7L18.3 7.3" stroke-width="1.1"/><path d="M8.8 11.5V19.9M10.5 11.5V19.9" stroke-width="1.1"/></svg>
<div class="abs" style="left:1405px;top:878px;font-size:18px;line-height:28px;color:#222;white-space:nowrap">用户分布占比</div>
<div class="sel" style="left:1772px;top:878px"></div>
<div class="abs" style="left:1783px;top:884px;font-size:18px;line-height:28px;color:#888;white-space:nowrap">本月</div>
<svg class="abs" style="left:1838px;top:893px;width:12px;height:7px" viewBox="0 0 12 7" fill="none" stroke="#777" stroke-width="1.6"><path d="M0.6 0.6L6 6L11.4 0.6"/></svg>
<svg class="abs" style="left:1863px;top:886px;width:18px;height:18px" viewBox="0 0 18 18" fill="none"><path d="M2.3 8.2A6.7 6.7 0 0 1 14.3 4.2" stroke="#333" stroke-width="2.2"/><path d="M16.6 1.3V7.6H10.4Z" fill="#333"/><path d="M15.7 9.8A6.7 6.7 0 0 1 3.7 13.8" stroke="#333" stroke-width="2.2"/><path d="M1.4 16.7V10.4H7.6Z" fill="#333"/></svg>
<div class="abs" style="left:0;top:942px;width:1920px;height:1px;background:#10201f"></div>
<div class="abs" style="left:60px;top:942px;width:430px;height:1px;background:#c9bcbc"></div>
<div class="abs" style="left:555px;top:942px;width:60px;height:1px;background:#8a9a9a"></div>
</body></html>
